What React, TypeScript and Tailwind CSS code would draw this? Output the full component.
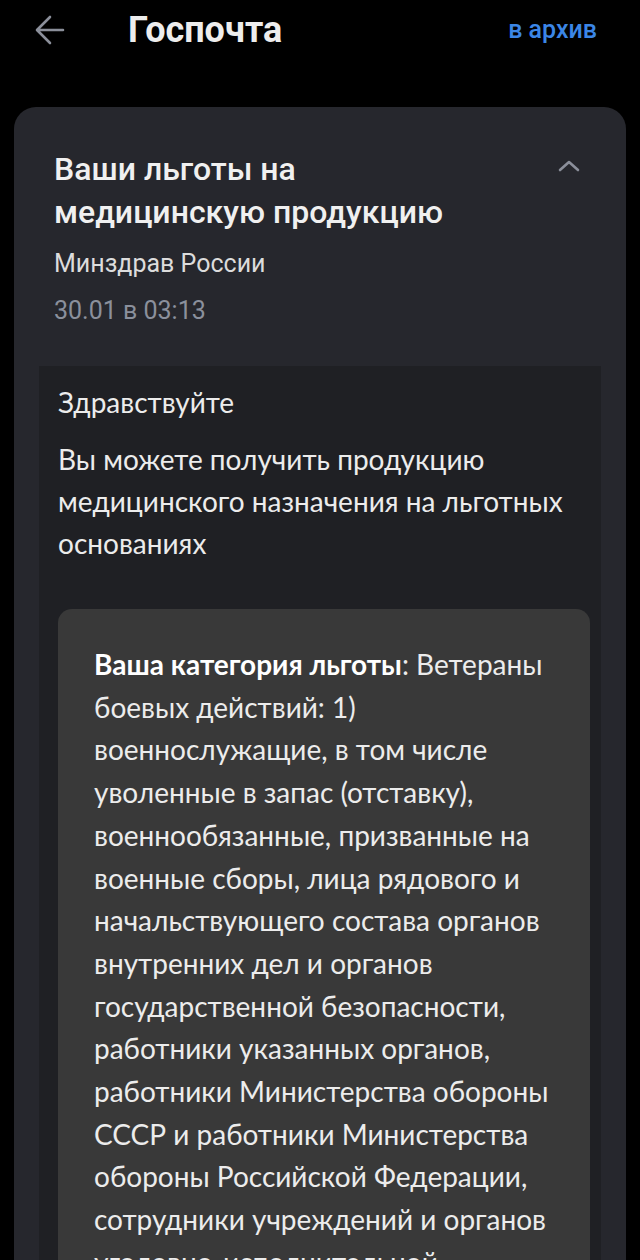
import type React from "react";

const ROBOTO = "font-['Roboto',sans-serif]";
const LATO = "font-['Lato',sans-serif]";

const BENEFIT_TEXT =
	"Ветераны боевых действий: 1) военнослужащие, в том числе уволенные в запас (отставку), военнообязанные, призванные на военные сборы, лица рядового и начальствующего состава органов внутренних дел и органов государственной безопасности, работники указанных органов, работники Министерства обороны СССР и работники Министерства обороны Российской Федерации, сотрудники учреждений и органов уголовно-исполнительной системы, направлявшиеся на работу в другие государства";

function BackArrow(): React.ReactElement {
	return (
		<svg width="30" height="30" viewBox="0 0 30 30" fill="none" aria-hidden>
			<path
				d="M28 15H3M15 2L2 15l13 13"
				stroke="#8b8f9a"
				strokeWidth="2.6"
				strokeLinecap="round"
				strokeLinejoin="round"
			/>
		</svg>
	);
}

function ChevronUp(): React.ReactElement {
	return (
		<svg width="22" height="12" viewBox="0 0 22 12" fill="none" aria-hidden>
			<path
				d="M2 10L11 2l9 8"
				stroke="#8b8f9a"
				strokeWidth="2.6"
				strokeLinecap="round"
				strokeLinejoin="round"
			/>
		</svg>
	);
}

export default function App(): React.ReactElement {
	return (
		<div className={`h-[1260px] w-[640px] overflow-hidden bg-black ${ROBOTO}`}>
			<header className="flex h-[60px] items-center pl-[35px] pr-[43px]">
				<BackArrow />
				<h1 className="ml-[63px] text-[36px] font-bold text-[#ededed]">Госпочта</h1>
				<button className="ml-auto text-[25px] font-medium text-[#3b86e6]">
					в архив
				</button>
			</header>

			<section className="mx-[14px] mt-[47px] rounded-t-[22px] bg-[#26272d] pb-10">
				<div className="flex items-start pl-10 pr-[46px] pt-[41px]">
					<h2 className="flex-1 text-[32px] font-medium leading-[43px] text-[#f0f0f0]">
						Ваши льготы на
						<br />
						медицинскую продукцию
					</h2>
					<div className="mt-[12px]">
						<ChevronUp />
					</div>
				</div>
				<p className="mt-[14px] pl-10 text-[25px] leading-[32px] text-[#dcdcdc]">
					Минздрав России
				</p>
				<p className="mt-[15px] pl-10 text-[25px] leading-[32px] text-[#8b909c]">
					30.01 в 03:13
				</p>

				<div className={`mx-[25px] mt-[39px] bg-[#1f2024] pb-10 pl-[19px] pr-[11px] pt-[16px] ${LATO}`}>
					<p className="text-[28px] leading-[40px] text-[#ececec]">Здравствуйте</p>
					<p className="mt-[16px] text-[28px] leading-[42px] text-[#ececec]">
						Вы можете получить продукцию медицинского назначения на льготных
						основаниях
					</p>
					<div className="mt-[45px] rounded-[14px] bg-[#393939] pb-10 pl-9 pr-[34px] pt-[34px]">
						<p className="text-[28px] leading-[42.7px] text-[#ececec]">
							<b className="font-bold text-white">Ваша категория льготы</b>:{" "}
							{BENEFIT_TEXT}
						</p>
					</div>
				</div>
			</section>
		</div>
	);
}
